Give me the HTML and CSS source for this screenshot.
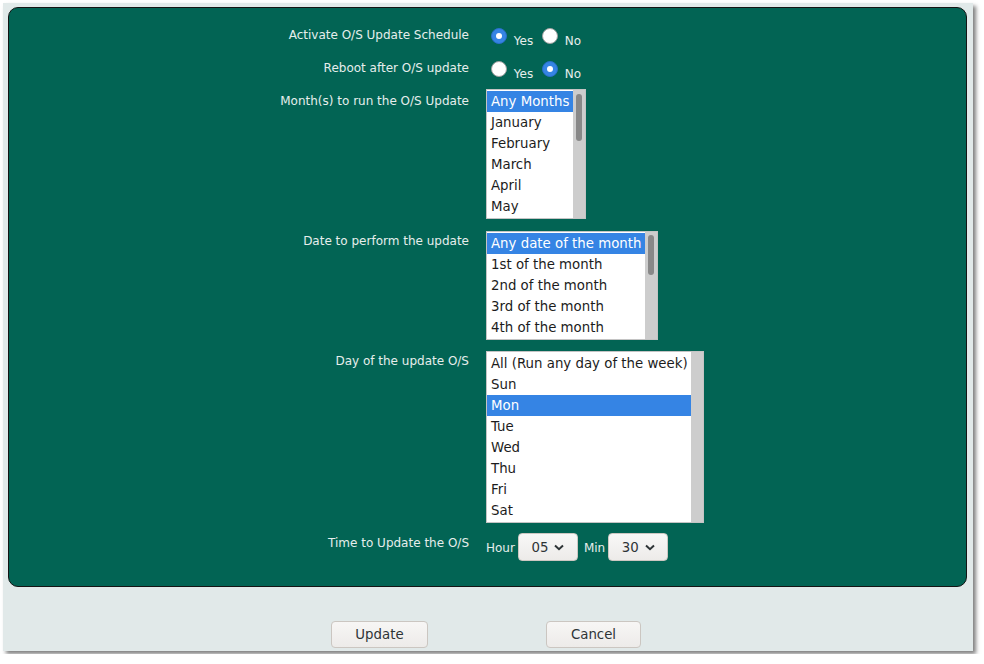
FILE: index.html
```html
<!DOCTYPE html>
<html>
<head>
<meta charset="utf-8">
<title>O/S Update Schedule</title>
<link rel="stylesheet" href="styles.css">
</head>
<body>
<div class="window">
  <div class="panel">
    <div class="row row-radio">
      <div class="label">Activate O/S Update Schedule</div>
      <div class="control radios"><span class="radio on"></span> Yes <span class="radio"></span> No</div>
    </div>
    <div class="row row-radio row-2">
      <div class="label">Reboot after O/S update</div>
      <div class="control radios"><span class="radio"></span> Yes <span class="radio on"></span> No</div>
    </div>
    <div class="row row-sel row-3">
      <div class="label">Month(s) to run the O/S Update</div>
      <div class="control">
        <div class="listbox lb-months">
          <div class="opts">
            <div class="opt sel">Any Months</div>
            <div class="opt">January</div>
            <div class="opt">February</div>
            <div class="opt">March</div>
            <div class="opt">April</div>
            <div class="opt">May</div>
          </div>
          <div class="sb"><div class="thumb thumb-months"></div></div>
        </div>
      </div>
    </div>
    <div class="row row-sel row-4">
      <div class="label">Date to perform the update</div>
      <div class="control">
        <div class="listbox lb-dates">
          <div class="opts">
            <div class="opt sel">Any date of the month</div>
            <div class="opt">1st of the month</div>
            <div class="opt">2nd of the month</div>
            <div class="opt">3rd of the month</div>
            <div class="opt">4th of the month</div>
          </div>
          <div class="sb"><div class="thumb thumb-dates"></div></div>
        </div>
      </div>
    </div>
    <div class="row row-sel row-5">
      <div class="label">Day of the update O/S</div>
      <div class="control">
        <div class="listbox lb-days">
          <div class="opts">
            <div class="opt">All (Run any day of the week)</div>
            <div class="opt">Sun</div>
            <div class="opt sel">Mon</div>
            <div class="opt">Tue</div>
            <div class="opt">Wed</div>
            <div class="opt">Thu</div>
            <div class="opt">Fri</div>
            <div class="opt">Sat</div>
          </div>
          <div class="sb"></div>
        </div>
      </div>
    </div>
    <div class="row row-time">
      <div class="label">Time to Update the O/S</div>
      <div class="control time">
        <span class="tlabel hour">Hour</span>
        <div class="drop"><span>05</span><svg width="10" height="7" viewBox="0 0 10 7"><polyline points="1,1.5 5,5.2 9,1.5" fill="none" stroke="#2e3436" stroke-width="2"/></svg></div>
        <span class="tlabel min">Min</span>
        <div class="drop"><span>30</span><svg width="10" height="7" viewBox="0 0 10 7"><polyline points="1,1.5 5,5.2 9,1.5" fill="none" stroke="#2e3436" stroke-width="2"/></svg></div>
      </div>
    </div>
  </div>
  <div class="actions">
    <button class="btn btn-update">Update</button>
    <button class="btn btn-cancel">Cancel</button>
  </div>
</div>
</body>
</html>
```
FILE: styles.css
```css
* { box-sizing: border-box; }
html, body { margin: 0; padding: 0; background: #ffffff; }
body {
  font-family: "DejaVu Sans", "Liberation Sans", sans-serif;
  padding: 3px;
}
.window {
  width: 970px;
  height: 648px;
  background: #e1e9e9;
  box-shadow: 3px 3px 4px rgba(0, 0, 0, 0.5);
  display: flex;
  flex-direction: column;
}
.panel {
  margin: 4px 6px 0 5px;
  height: 580px;
  border: 1px solid #141414;
  border-radius: 10px;
  background: #026454;
  padding-top: 17px;
}
.row {
  display: flex;
  align-items: flex-start;
}
.label {
  width: 460px;
  margin-right: 17px;
  text-align: right;
  font-size: 12px;
  line-height: 14px;
  color: #e6eeec;
  padding-top: 3px;
}
.row-2 { margin-top: 10px; }
.row-3 { margin-top: 8px; }
.row-4 { margin-top: 12px; }
.row-5 { margin-top: 11px; }
.row-time { margin-top: 10px; }
.row-3 .label { padding-top: 5px; }
.row-4 .label, .row-5 .label { padding-top: 3px; }
.row-time .label { padding-top: 3px; }
.radios {
  font-size: 12px;
  line-height: 14px;
  color: #e6eeec;
  padding-top: 1px;
}
.radio {
  display: inline-block;
  width: 16px;
  height: 16px;
  margin: 3px 3px 0 5px;
  border-radius: 50%;
  background: #ffffff;
  border: 1px solid #a0a0a0;
  position: relative;
  top: -1px;
}
.radio.on {
  background: #3584e4;
  border-color: #2a6fc9;
}
.radio.on::after {
  content: "";
  position: absolute;
  left: 4px;
  top: 4px;
  width: 6px;
  height: 6px;
  border-radius: 50%;
  background: #ffffff;
}
.listbox {
  display: flex;
  border: 1px solid #c4c4c4;
  background: #ffffff;
}
.opts { padding: 1px 0; }
.opt {
  font-size: 13.333px;
  line-height: 21px;
  height: 21px;
  padding-left: 4px;
  color: #1c1c1c;
  white-space: nowrap;
  overflow: hidden;
}
.opt.sel { background: #3584e4; color: #ffffff; }
.sb {
  width: 12px;
  background: #cdcdcd;
  position: relative;
}
.thumb {
  position: absolute;
  left: 3px;
  width: 6px;
  border-radius: 3px;
  background: #888888;
}
.thumb-months { top: 4px; height: 47px; }
.thumb-dates { top: 3px; height: 40px; }
.lb-months .opts { width: 86px; }
.lb-dates .opts { width: 158px; }
.lb-days .opts { width: 204px; }
.time {
  display: flex;
  align-items: center;
}
.tlabel {
  font-size: 12px;
  color: #e6eeec;
  margin-top: 2px;
}
.hour { margin-right: 3px; }
.min { margin: 2px 3px 0 6px; }
.drop {
  width: 60px;
  height: 28px;
  border: 1px solid #cdc7c2;
  border-radius: 4px;
  background: linear-gradient(#f8f8f7, #edebe9);
  display: flex;
  align-items: center;
  justify-content: center;
  gap: 6px;
  font-size: 13.333px;
  color: #2e3436;
}
.drop svg { margin-top: 1px; }
.actions {
  margin-top: 34px;
  padding-left: 328px;
  display: flex;
  gap: 118px;
}
.btn {
  height: 27px;
  border: 1px solid #cbc6c1;
  border-radius: 4px;
  background: linear-gradient(#f7f6f5, #edebe9);
  font-family: "DejaVu Sans", "Liberation Sans", sans-serif;
  font-size: 13.333px;
  color: #2e3436;
  padding: 0 0 1px;
}
.btn-update { width: 97px; }
.btn-cancel { width: 95px; }
```
